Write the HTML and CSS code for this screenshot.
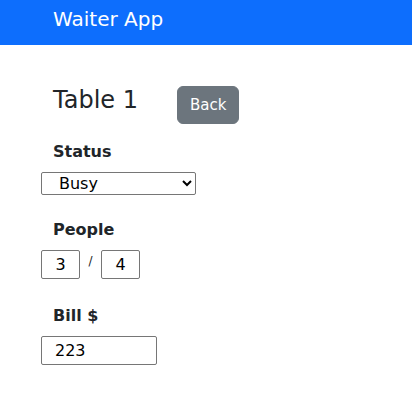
FILE: index.html
```html
<!DOCTYPE html>
<html>
<head>
<meta charset="utf-8">
<title>Waiter App</title>
<link rel="stylesheet" href="styles.css">
</head>
<body>
<nav class="navbar"><span class="brand">Waiter App</span></nav>
<main class="main">
  <div class="header">
    <h2 class="title">Table 1</h2>
    <button class="btn-back" type="button">Back</button>
  </div>
  <div class="group group-status">
    <div class="label">Status</div>
    <select class="select">
      <option>Busy</option>
      <option>Free</option>
      <option>Cleaning</option>
      <option>Reserved</option>
    </select>
  </div>
  <div class="group group-people">
    <div class="label">People</div>
    <div class="people-row">
      <input class="input input-small" type="text" value="3">
      <span class="slash">/</span>
      <input class="input input-small" type="text" value="4">
    </div>
  </div>
  <div class="group group-bill">
    <div class="label">Bill $</div>
    <input class="input input-bill" type="text" value="223">
  </div>
</main>
</body>
</html>
```

FILE: styles.css
```css
* { box-sizing: border-box; }

body {
  margin: 0;
  font-family: "DejaVu Sans", sans-serif;
  color: #212529;
  background: #fff;
}

.navbar {
  height: 45px;
  background: #0d6efd;
  padding: 4px 0 0 53px;
}

.brand {
  display: block;
  color: #fff;
  font-size: 20px;
  line-height: 30px;
}

.main {
  padding-left: 41px;
}

.header {
  display: flex;
  align-items: flex-start;
  margin-top: 39px;
}

.title {
  margin: 1px 39px 0 12px;
  font-size: 24px;
  line-height: 30px;
  font-weight: 400;
}

.btn-back {
  margin-top: 2px;
  height: 38px;
  padding: 6px 12px;
  font-family: "DejaVu Sans", sans-serif;
  font-size: 15px;
  line-height: 24px;
  color: #fff;
  background: #6c757d;
  border: 1px solid #6c757d;
  border-radius: 6px;
}

.group-status { margin-top: 16px; }
.group-people { margin-top: 23px; }
.group-bill { margin-top: 25px; }

.label {
  padding-left: 12px;
  font-weight: 700;
  font-size: 16px;
  line-height: 24px;
  margin-bottom: 8px;
}

.select {
  display: block;
  width: 155px;
  height: 23px;
  padding: 0 0 0 13px;
  font-family: "DejaVu Sans", sans-serif;
  font-size: 16px;
  color: #000;
  background: #fff;
  border: 1px solid #767676;
  border-radius: 2px;
}

.people-row {
  display: flex;
  align-items: flex-start;
}

.input {
  display: block;
  height: 29px;
  padding: 4px 13px;
  font-family: "DejaVu Sans", sans-serif;
  font-size: 16px;
  line-height: 19px;
  color: #000;
  background: #fff;
  border: 1px solid #767676;
  border-radius: 2px;
  outline: none;
}

.input-small {
  width: 39px;
  padding: 4px 2px;
  text-align: center;
}

.slash {
  width: 21px;
  margin-top: 5px;
  text-align: center;
  font-size: 12px;
  line-height: 12px;
}

.input-bill {
  width: 116px;
}
```
